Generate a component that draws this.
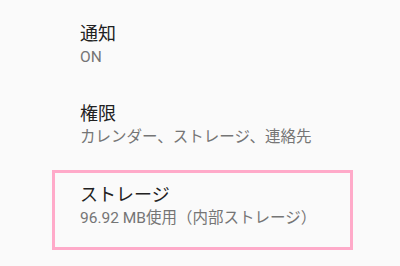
const rows = [
  { title: "通知", summary: "ON", h: "h-[80px]" },
  { title: "権限", summary: "カレンダー、ストレージ、連絡先", h: "h-[83px]" },
];

const font = { fontFamily: 'Roboto, "Noto Sans CJK JP", sans-serif' };

function Row({ title, summary, h }: { title: string; summary: string; h: string }) {
  return (
    <div className={`${h} pl-[80px] pt-[15px]`}>
      <div className="text-[18px] leading-[24px] text-[#212121]">{title}</div>
      <div className="text-[15.5px] leading-[22px] text-[#757575]">{summary}</div>
    </div>
  );
}

export default function App() {
  return (
    <div className="h-[266px] w-[400px] overflow-hidden bg-[#fafafa] pt-[7px]" style={font}>
      {rows.map((r) => (
        <Row key={r.title} {...r} />
      ))}
      {/* highlighted row */}
      <div className="ml-[52px] h-[80px] w-[301px] border-[3px] border-[#ffaac9] pl-[25px] pt-[10px]">
        <div className="text-[18px] leading-[24px] text-[#212121]">ストレージ</div>
        <div className="text-[15.5px] leading-[22px] text-[#757575]">96.92 MB使用（内部ストレージ）</div>
      </div>
    </div>
  );
}
